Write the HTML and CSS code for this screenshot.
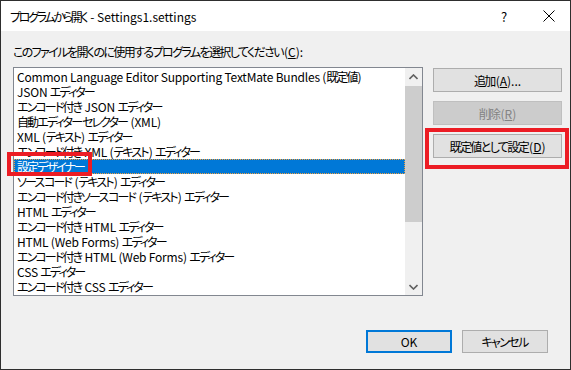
FILE: index.html
```html
<!DOCTYPE html>
<html lang="ja">
<head>
<meta charset="utf-8">
<title>プログラムから開く</title>
<link rel="stylesheet" href="styles.css">
</head>
<body>
<div class="window">
  <div class="titlebar">
    <span class="title"><span class="k kt">プログラムから開く</span> - Settings1.settings</span>
    <span class="tb-help">?</span>
    <span class="tb-close">
      <svg width="12" height="12" viewBox="0 0 12 12"><path d="M0.5 0.5 L11.5 11.5 M11.5 0.5 L0.5 11.5" stroke="#000" stroke-width="1" fill="none"/></svg>
    </span>
  </div>
  <div class="content">
    <div class="label"><span class="k">このファイルを開くのに使用するプログラムを選択してください</span>(<u>C</u>):</div>
    <div class="main">
      <div class="listbox">
        <ul class="items">
          <li>Common Language Editor Supporting TextMate Bundles (<span class="k">既定値</span>)</li>
          <li>JSON <span class="k">エディター</span></li>
          <li><span class="k">エンコード付き</span> JSON <span class="k">エディター</span></li>
          <li><span class="k">自動エディター セレクター</span> (XML)</li>
          <li>XML (<span class="k">テキスト</span>) <span class="k">エディター</span></li>
          <li><span class="k">エンコード付き</span> XML (<span class="k">テキスト</span>) <span class="k">エディター</span></li>
          <li class="selected"><span class="k">設定デザイナー</span></li>
          <li><span class="k">ソース コード</span> (<span class="k">テキスト</span>) <span class="k">エディター</span></li>
          <li><span class="k">エンコード付きソース コード</span> (<span class="k">テキスト</span>) <span class="k">エディター</span></li>
          <li>HTML <span class="k">エディター</span></li>
          <li><span class="k">エンコード付き</span> HTML <span class="k">エディター</span></li>
          <li>HTML (Web Forms) <span class="k">エディター</span></li>
          <li><span class="k">エンコード付き</span> HTML (Web Forms) <span class="k">エディター</span></li>
          <li>CSS <span class="k">エディター</span></li>
          <li><span class="k">エンコード付き</span> CSS <span class="k">エディター</span></li>
        </ul>
        <div class="scrollbar">
          <div class="sb-btn">
            <svg width="9" height="6" viewBox="0 0 9 6"><path d="M0.5 5 L4.5 1 L8.5 5" stroke="#606060" stroke-width="1.6" fill="none"/></svg>
          </div>
          <div class="sb-thumb"></div>
          <div class="sb-track"></div>
          <div class="sb-btn">
            <svg width="9" height="6" viewBox="0 0 9 6"><path d="M0.5 1 L4.5 5 L8.5 1" stroke="#606060" stroke-width="1.6" fill="none"/></svg>
          </div>
        </div>
      </div>
      <div class="side">
        <button class="btn wide"><span class="k">追加</span>(<u>A</u>)...</button>
        <button class="btn wide disabled"><span class="k">削除</span>(<u>R</u>)</button>
        <button class="btn wide"><span class="k">既定値として設定</span>(<u>D</u>)</button>
      </div>
    </div>
    <div class="footer">
      <button class="btn foot default">OK</button>
      <button class="btn foot"><span class="k">キャンセル</span></button>
    </div>
  </div>
  <div class="mark mark-item"></div>
  <div class="mark mark-btn"></div>
</div>
</body>
</html>
```
FILE: styles.css
```css
* { box-sizing: border-box; }
html, body { margin: 0; padding: 0; }
body {
  width: 571px;
  height: 370px;
  overflow: hidden;
  font-family: "Noto Sans CJK JP", "Noto Sans", sans-serif;
  font-feature-settings: "palt";
  font-size: 12px;
  color: #000;
}
.k {
  display: inline-block;
  line-height: 15px;
  letter-spacing: -1.6px;
  padding-right: 1px;
}
.kt { letter-spacing: -2.3px; }
.window {
  position: relative;
  width: 571px;
  height: 370px;
  border: 1px solid #2e2e2e;
  background: #f0f0f0;
  display: flex;
  flex-direction: column;
}
.titlebar {
  height: 30px;
  background: #fff;
  display: flex;
  align-items: center;
  padding-left: 9px;
}
.title { flex: 1; font-size: 12px; line-height: 15px; }
.tb-help { width: 16px; text-align: center; margin-right: 31px; font-size: 13px; }
.tb-close { width: 12px; height: 12px; margin-right: 15px; display: flex; }
.content {
  flex: 1;
  padding: 13px 0 0 12px;
  display: flex;
  flex-direction: column;
}
.label { line-height: 15px; height: 15px; }
.main {
  display: flex;
  margin-top: 8px;
  gap: 10px;
}
.listbox {
  width: 410px;
  height: 229px;
  border: 1px solid #828790;
  background: #fff;
  display: flex;
}
.items {
  list-style: none;
  margin: 0;
  padding: 1px 0 0 0;
  flex: 1;
}
.items li {
  height: 15px;
  line-height: 15px;
  padding-left: 3px;
  white-space: nowrap;
  letter-spacing: -0.2px;
}
.items li .k { letter-spacing: -1.9px; }
.items li.selected {
  background: #0078d7;
  color: #fff;
  outline: 1px dotted #f0a040;
  outline-offset: -1px;
}
.scrollbar {
  width: 17px;
  display: flex;
  flex-direction: column;
  background: #f0f0f0;
}
.sb-btn {
  height: 17px;
  display: flex;
  align-items: center;
  justify-content: center;
}
.sb-thumb { height: 136px; background: #cdcdcd; margin: 1px 0 0 0; }
.sb-track { flex: 1; }
.side {
  display: flex;
  flex-direction: column;
  gap: 9px;
  padding-top: 1px;
}
.btn {
  font-family: inherit;
  font-size: 12px;
  font-feature-settings: "palt";
  color: #000;
  background: #e1e1e1;
  border: 1px solid #adadad;
  padding: 0;
  margin: 0;
  cursor: default;
  line-height: 15px;
}
.btn u { text-decoration: underline; text-underline-offset: 1px; }
.wide { width: 129px; height: 24px; }
.disabled { background: #cccccc; border-color: #bfbfbf; color: #838383; }
.footer {
  display: flex;
  justify-content: flex-end;
  gap: 10px;
  margin-top: 34px;
  padding-right: 22px;
}
.foot { width: 86px; height: 23px; }
.default { border: 2px solid #0078d7; }
.mark {
  position: absolute;
  border: 4px solid #ec1c24;
  pointer-events: none;
}
.mark-item { left: 6px; top: 151px; width: 85px; height: 24px; }
.mark-btn { left: 424px; top: 127px; width: 144px; height: 41px; }
```
